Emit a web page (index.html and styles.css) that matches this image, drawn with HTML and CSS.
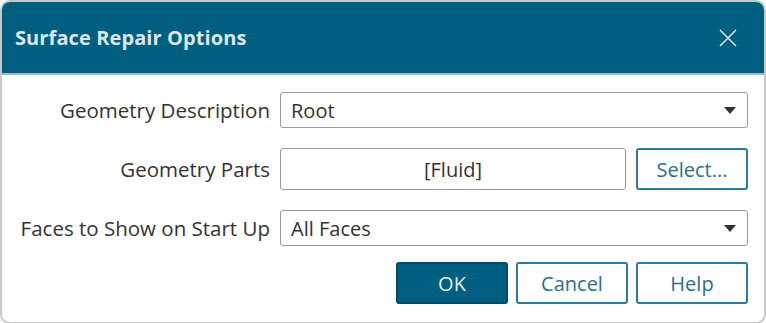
FILE: index.html
```html
<!DOCTYPE html>
<html lang="en">
<head>
    <meta charset="UTF-8">
    <title>Surface Repair Options</title>
    <link rel="stylesheet" href="styles.css">
</head>
<body>
    <div class="dialog">
        <div class="titlebar">
            <h1>Surface Repair Options</h1>
            <button class="close" aria-label="Close">
                <svg width="18" height="18" viewBox="0 0 18 18"><path d="M1 1L17 17M17 1L1 17" stroke="#d5e2e8" stroke-width="1.6"/></svg>
            </button>
        </div>

        <div class="form">
            <label class="label">Geometry Description</label>
            <div class="select">
                <span>Root</span>
                <span class="arrow"></span>
            </div>

            <label class="label parts-label">Geometry Parts</label>
            <div class="parts">
                <div class="field">[Fluid]</div>
                <button class="btn">Select...</button>
            </div>

            <label class="label">Faces to Show on Start Up</label>
            <div class="select">
                <span>All Faces</span>
                <span class="arrow"></span>
            </div>
        </div>

        <div class="actions">
            <button class="btn primary">OK</button>
            <button class="btn">Cancel</button>
            <button class="btn">Help</button>
        </div>
    </div>
</body>
</html>
```

FILE: styles.css
```css
body {
    margin: 0;
    padding: 0;
    background: #ffffff;
    font-family: 'Open Sans', 'Noto Sans', sans-serif;
    color: #333333;
}

.dialog {
    width: 762px;
    height: 320px;
    border: 2px solid #c9c9c9;
    border-radius: 10px;
    overflow: hidden;
    background: #ffffff;
}

.titlebar {
    height: 71px;
    background: #005f80;
    border-bottom: 2px solid #8fbfd3;
    display: flex;
    align-items: center;
    justify-content: space-between;
    padding: 0 27px 0 13px;
}

.titlebar h1 {
    margin: 0;
    font-size: 20px;
    font-weight: 700;
    color: #dde6eb;
    letter-spacing: 0.1px;
}

.close {
    background: none;
    border: none;
    padding: 0;
    width: 18px;
    height: 18px;
    cursor: pointer;
}

.form {
    display: grid;
    grid-template-columns: 268px 468px;
    column-gap: 10px;
    row-gap: 20px;
    align-items: center;
    padding: 17px 0 0 0;
}

.label {
    text-align: right;
    font-size: 20.5px;
    white-space: nowrap;
}

.select {
    height: 34px;
    border: 1px solid #9b9b9b;
    border-radius: 3px;
    display: flex;
    align-items: center;
    justify-content: space-between;
    padding: 0 11px 0 10px;
    font-size: 20px;
}

.arrow {
    width: 0;
    height: 0;
    border-left: 6px solid transparent;
    border-right: 6px solid transparent;
    border-top: 7px solid #333333;
}

.parts {
    display: flex;
    gap: 10px;
}

.field {
    flex: 1;
    height: 40px;
    border: 1px solid #9b9b9b;
    border-radius: 3px;
    display: flex;
    align-items: center;
    justify-content: center;
    font-size: 20px;
}

.btn {
    width: 112px;
    height: 42px;
    background: #ffffff;
    border: 2px solid #2c7b9c;
    border-radius: 3px;
    color: #2a6f8c;
    font-family: 'Open Sans', 'Noto Sans', sans-serif;
    font-size: 20px;
    padding: 0;
    cursor: pointer;
}

.btn.primary {
    background: #005f80;
    border-color: #004a64;
    color: #e4edf1;
}

.actions {
    display: flex;
    justify-content: flex-end;
    gap: 8px;
    padding: 16px 16px 0 0;
}
```
